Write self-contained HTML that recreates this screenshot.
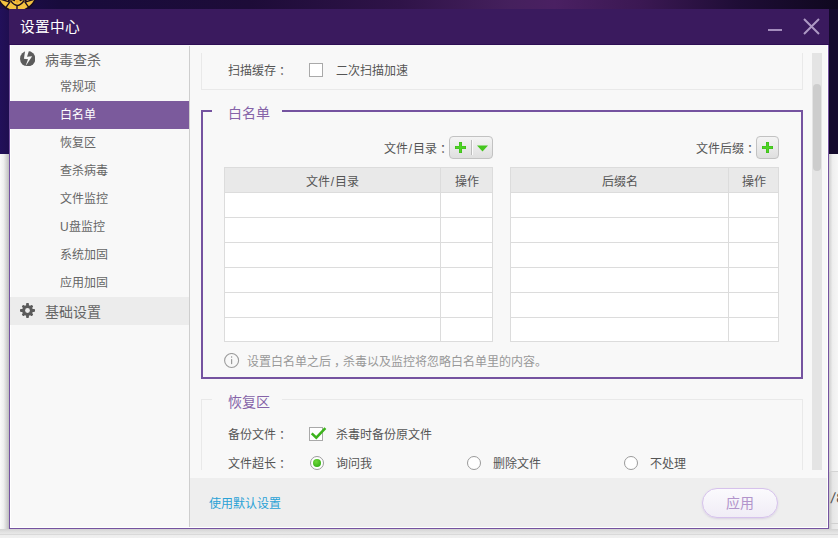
<!DOCTYPE html>
<html lang="zh-CN">
<head>
<meta charset="utf-8">
<title>设置中心</title>
<style>
*{box-sizing:border-box;margin:0;padding:0}
html,body{width:838px;height:538px;overflow:hidden}
body{position:relative;font-family:"Liberation Sans",sans-serif;font-size:12px;color:#555;background:#f3f3f3}
.abs{position:absolute}
/* ---------- desktop behind the dialog ---------- */
#bgtop{left:0;top:0;width:838px;height:154px;background:linear-gradient(90deg,#1d0d4d 0px,#180b3c 60px,#1d0c38 250px,#2f1348 400px,#45205d 510px,#4a2062 555px,#3b1853 640px,#1e0d35 740px,#0f081f 838px)}
#bgleft{left:0;top:9px;width:9px;height:145px;background:linear-gradient(90deg,#22105a,#1f0e50)}
#bgright{left:829px;top:9px;width:9px;height:145px;background:#140a2c}
#shl{left:0;top:154px;width:9px;height:380px;background:linear-gradient(90deg,#fafafa 0%,#efefef 40%,#bebebe 100%)}
#shr{left:829px;top:154px;width:9px;height:380px;background:linear-gradient(90deg,#cdcdcd 0%,#efefef 40%,#f6f6f6 100%)}
#bgbot{left:0;top:529px;width:838px;height:9px;background:linear-gradient(180deg,#d3d3d3 0,#e2e2e2 3px,#e8e8e8 5px,#d9d9d9 5px,#d9d9d9 6px,#eeeeee 6px,#f0f0f0 9px)}
#ball{left:-5px;top:-5px;width:45px;height:20px}
/* ---------- dialog ---------- */
#dlg{left:9px;top:9px;width:820px;height:520px;background:#f8f8f8;border:1px solid #7553a0;border-top:none;box-shadow:inset 0 0 0 1px #fff}
#title{left:9px;top:9px;width:820px;height:36px;background:#3a1a5e;border-bottom:1px solid #2e0e54;color:#fff;font-size:14.67px;line-height:36px;padding-left:11px;white-space:nowrap}
#min{left:768px;top:29px;width:14px;height:2px;background:#a48dbd}
#close{left:803px;top:18px;width:17px;height:17px}
/* ---------- sidebar ---------- */
#side{left:11px;top:46px;width:179px;height:481px;background:#f8f8f8;border-right:1px solid #cecece}
.h1{left:-1px;width:179px;height:28px;line-height:28px;font-size:14px;color:#666;padding-left:35px;white-space:nowrap}
.it{left:-1px;width:179px;height:28px;line-height:28px;font-size:12px;color:#666;padding-left:50px;white-space:nowrap}
.it.sel{background:#7b5a9c;color:#fff}
.ico{left:10px;top:6px;width:15px;height:15px}
/* ---------- content ---------- */
#view{left:190px;top:53px;width:622px;height:417px;overflow:hidden}
#track{left:812px;top:53px;width:10px;height:417px;background:#e4e4e4}
#thumb{left:813px;top:84px;width:8px;height:87px;background:#cdcdcd;border-radius:4px}
.lbl{white-space:nowrap;height:16px;line-height:16px;font-size:12px;color:#555;margin-top:1px}
.sl{padding:0 1px}
.co{position:relative;left:3px}
.cb{width:14px;height:14px;background:#fff;border:1px solid #a9a9a9}
.rd{width:14px;height:14px;background:#fff;border:1px solid #9a9a9a;border-radius:50%}
.rd.on::after{content:"";position:absolute;left:2px;top:2px;width:8px;height:8px;border-radius:50%;background:radial-gradient(circle at 40% 35%,#6fd83a,#3bb41a 70%)}
.btn{height:23px;border:1px solid #c2c2c2;border-radius:4px;background:linear-gradient(180deg,#f4f4f4,#dfdfdf)}
table{position:absolute;border-collapse:collapse;table-layout:fixed;background:#fff}
td,th{border:1px solid #dcdcdc;height:25px;padding:0;font-weight:normal;font-size:12px;color:#555;text-align:center}
th{background:#e9e9e9}
tr.last td{height:24px}
/* ---------- footer ---------- */
#foot{left:190px;top:478px;width:637px;height:49px;background:#eeeeee}
#link{left:19px;top:17px;color:#2aa2d6;font-size:12px;line-height:18px;white-space:nowrap}
#apply{left:512px;top:10px;width:76px;height:30px;border:1px solid #d6c2ec;border-radius:15px;background:linear-gradient(180deg,#fbfafd,#f0ecf6);color:#b294cb;font-size:14px;line-height:28px;text-align:center;box-shadow:0 1px 2px rgba(150,120,190,.25)}
</style>
</head>
<body>
<!-- desktop behind -->
<div id="bgtop" class="abs"></div>
<div id="bgleft" class="abs"></div>
<div id="bgright" class="abs"></div>
<div id="shl" class="abs"></div>
<div id="shr" class="abs"></div>
<div id="bgbot" class="abs"></div>
<div class="abs" style="left:829px;top:472px;width:9px;height:57px;background:rgba(0,0,0,.035)"></div>
<div class="abs" style="left:829px;top:471px;width:9px;height:1px;background:#d4d4d4"></div>
<div class="abs" style="left:829px;top:523px;width:9px;height:1px;background:#d0d0d0"></div>
<div class="abs" style="left:831px;top:489px;font-size:15px;line-height:18px;color:#555;white-space:nowrap;letter-spacing:1px"><span style="display:inline-block;transform:skewX(-8deg)">/</span>8</div>
<svg id="ball" class="abs" viewBox="-5 -5 45 20"><circle cx="17" cy="-8.7" r="19.9" fill="#f4c240" stroke="#1b0c1e" stroke-width="1.5"/><g stroke="#1b0c1e" stroke-width="1.4" fill="none" stroke-linecap="round"><path d="M9.8 2.1L5.6 7.8M25 2.1L29.2 7.8M17 5.6V10M11 1.2Q17 9.5 23.6 1.2M8.6 0.6Q11.8 -1.6 14.4 0.6M20.2 0.6Q22.8 -1.6 26 0.6M9.8 2.1L0 -1M25 2.1L35 -1"/></g><path d="M15 0.4h4.4L17.2 3.4z" fill="#e9a228"/></svg>

<!-- dialog -->
<div id="dlg" class="abs"></div>
<div id="title" class="abs">设置中心</div>
<div id="min" class="abs"></div>
<svg id="close" class="abs" viewBox="0 0 17 17"><path d="M1 1L16 16M16 1L1 16" stroke="#ad99c4" stroke-width="2" fill="none"/></svg>

<!-- sidebar -->
<div id="side" class="abs">
  <div class="abs h1" style="top:0px"><svg class="abs" style="left:10px;top:4.6px;width:15.4px;height:15.4px" viewBox="0 0 15.3 15.3"><circle cx="7.65" cy="7.65" r="7.65" fill="#5c5c5c"/><path d="M5.1 -0.2L3.9 7.7L8 8.2L5.3 15.4L12.1 5.3L7 5.8L8.9 -0.2Z" fill="#f8f8f8"/></svg>病毒查杀</div>
  <div class="abs it" style="top:27px">常规项</div>
  <div class="abs it sel" style="top:55px">白名单</div>
  <div class="abs it" style="top:83px">恢复区</div>
  <div class="abs it" style="top:111px">查杀病毒</div>
  <div class="abs it" style="top:139px">文件监控</div>
  <div class="abs it" style="top:167px">U盘监控</div>
  <div class="abs it" style="top:195px">系统加固</div>
  <div class="abs it" style="top:223px">应用加固</div>
  <div class="abs h1" style="top:251px;background:#ececec;line-height:30px"><svg class="abs ico" viewBox="0 0 15 15"><g fill="#5a5a5a"><circle cx="7.5" cy="7.5" r="5.4"/><rect id="t" x="6.1" y="0" width="2.8" height="15" rx=".8"/><use href="#t" transform="rotate(90 7.5 7.5)"/><rect x="6.1" y="0.5" width="2.8" height="14" rx="1" transform="rotate(45 7.5 7.5)"/><rect x="6.1" y="0.5" width="2.8" height="14" rx="1" transform="rotate(-45 7.5 7.5)"/></g><circle cx="7.5" cy="7.5" r="2.4" fill="#ececec"/></svg>基础设置</div>
</div>

<!-- scrolled content: coordinates inside #view are page coords minus (190,53) -->
<div id="view" class="abs">
  <!-- scan cache panel (top is scrolled out) -->
  <div class="abs" style="left:11px;top:-20px;width:602px;height:57px;border:1px solid #e9e9e9"></div>
  <div class="abs lbl" style="left:38px;top:9px">扫描缓存<span class="co">：</span></div>
  <div class="abs cb" style="left:119px;top:10px"></div>
  <div class="abs lbl" style="left:146px;top:9px">二次扫描加速</div>

  <!-- whitelist group -->
  <div class="abs" style="left:11px;top:57px;width:602px;height:269px;border:2px solid #7553a0"></div>
  <div class="abs" style="left:22px;top:51px;width:70px;height:18px;background:#f8f8f8;color:#8563a8;font-size:14px;line-height:18px;padding-left:16px;white-space:nowrap">白名单</div>

  <div class="abs lbl" style="right:363px;top:87px">文件<span class="sl">/</span>目录<span class="co">：</span></div>
  <div class="abs btn" style="left:259px;top:83px;width:44px">
    <svg class="abs" style="left:5px;top:5px" width="11" height="11" viewBox="0 0 11 11"><path d="M4 0h3v4h4v3H7v4H4V7H0V4h4z" fill="#3dba1a"/><path d="M4.6 .6h1.8v4h4v1.8h-4v4H4.6v-4h-4V4.6h4z" fill="#4fd426"/></svg>
    <div class="abs" style="left:21px;top:3px;width:2px;height:15px;background:linear-gradient(90deg,#bcbcbc 50%,#fbfbfb 50%)"></div>
    <svg class="abs" style="left:27px;top:8px" width="11" height="7" viewBox="0 0 11 7"><path d="M0 0.4h11L5.5 6.6z" fill="#45c61f"/></svg>
  </div>
  <div class="abs lbl" style="right:56px;top:87px">文件后缀<span class="co">：</span></div>
  <div class="abs btn" style="left:566px;top:83px;width:23px">
    <svg class="abs" style="left:5px;top:5px" width="11" height="11" viewBox="0 0 11 11"><path d="M4 0h3v4h4v3H7v4H4V7H0V4h4z" fill="#3dba1a"/><path d="M4.6 .6h1.8v4h4v1.8h-4v4H4.6v-4h-4V4.6h4z" fill="#4fd426"/></svg>
  </div>

  <table style="left:34px;top:114px;width:268px">
    <colgroup><col style="width:216px"><col style="width:52px"></colgroup>
    <tr><th>文件<span class="sl">/</span>目录</th><th>操作</th></tr>
    <tr><td></td><td></td></tr><tr><td></td><td></td></tr><tr><td></td><td></td></tr>
    <tr><td></td><td></td></tr><tr><td></td><td></td></tr><tr class="last"><td></td><td></td></tr>
  </table>
  <table style="left:320px;top:114px;width:268px">
    <colgroup><col style="width:218px"><col style="width:50px"></colgroup>
    <tr><th>后缀名</th><th>操作</th></tr>
    <tr><td></td><td></td></tr><tr><td></td><td></td></tr><tr><td></td><td></td></tr>
    <tr><td></td><td></td></tr><tr><td></td><td></td></tr><tr class="last"><td></td><td></td></tr>
  </table>

  <svg class="abs" style="left:34px;top:300px" width="16" height="16" viewBox="0 0 16 16"><circle cx="7.6" cy="7.5" r="7" fill="none" stroke="#9c9c9c" stroke-width="1.1"/><rect x="7" y="6.1" width="1.2" height="5" fill="#9c9c9c"/><rect x="7" y="3.3" width="1.2" height="1.4" fill="#9c9c9c"/></svg>
  <div class="abs lbl" style="left:57px;top:300px;color:#999">设置白名单之后<span class="co">，</span>杀毒以及监控将忽略白名单里的内容。</div>

  <!-- recovery group -->
  <div class="abs" style="left:11px;top:346px;width:602px;height:120px;border:1px solid #e9e9e9"></div>
  <div class="abs" style="left:22px;top:340px;width:70px;height:18px;background:#f8f8f8;color:#8563a8;font-size:14px;line-height:18px;padding-left:16px;white-space:nowrap">恢复区</div>
  <div class="abs lbl" style="left:38px;top:373px">备份文件<span class="co">：</span></div>
  <div class="abs cb" style="left:119px;top:374px"></div>
  <svg class="abs" style="left:120px;top:371px" width="17" height="16" viewBox="0 0 17 16"><path d="M1.7 9.3L6.3 13.7L15.4 4.2" fill="none" stroke="#3cb31c" stroke-width="2.5"/></svg>
  <div class="abs lbl" style="left:146px;top:373px">杀毒时备份原文件</div>
  <div class="abs lbl" style="left:38px;top:402px">文件超长<span class="co">：</span></div>
  <div class="abs rd on" style="left:120px;top:403px"></div>
  <div class="abs lbl" style="left:146px;top:402px">询问我</div>
  <div class="abs rd" style="left:277px;top:403px"></div>
  <div class="abs lbl" style="left:303px;top:402px">删除文件</div>
  <div class="abs rd" style="left:434px;top:403px"></div>
  <div class="abs lbl" style="left:460px;top:402px">不处理</div>
</div>
<div id="track" class="abs"></div>
<div id="thumb" class="abs"></div>

<!-- footer -->
<div id="foot" class="abs">
  <div id="link" class="abs">使用默认设置</div>
  <div id="apply" class="abs">应用</div>
</div>
</body>
</html>
